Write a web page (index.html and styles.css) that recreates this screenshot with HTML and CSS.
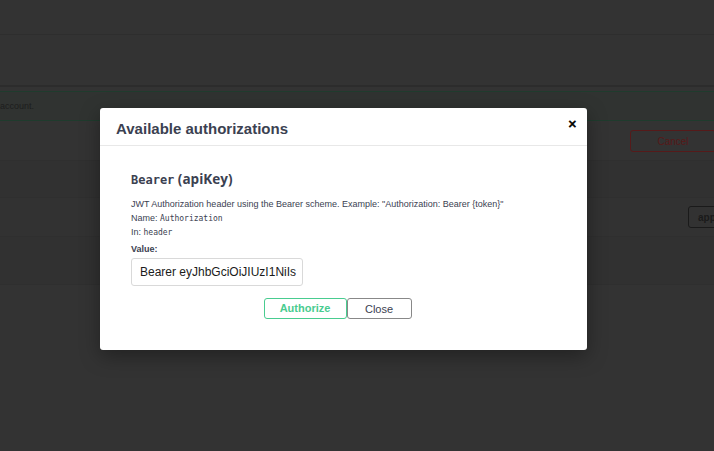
FILE: index.html
```html
<!DOCTYPE html>
<html>
<head>
<meta charset="utf-8">
<link rel="stylesheet" href="styles.css">
</head>
<body>
<div class="page">
  <div class="row r1"></div>
  <div class="row r2"></div>
  <div class="gap"></div>
  <div class="row note"><span>account.</span></div>
  <div class="row r3"><button class="cancel">Cancel</button></div>
  <div class="row r4"></div>
  <div class="row r5"><button class="app">app</button></div>
  <div class="row r6"></div>
  <div class="row r7"></div>
</div>
<div class="modal">
  <div class="modal-header">
    <h3>Available authorizations</h3>
    <button class="x">&#x2715;</button>
  </div>
  <div class="modal-body">
    <h4><code>Bearer</code>&nbsp;(apiKey)</h4>
    <p class="desc">JWT Authorization header using the Bearer scheme. Example: "Authorization: Bearer {token}"</p>
    <p class="meta">Name: <code>Authorization</code></p>
    <p class="meta">In: <code>header</code></p>
    <label class="lbl">Value:</label>
    <div class="input">Bearer eyJhbGciOiJIUzI1NiIs</div>
    <div class="actions">
      <button class="btn auth">Authorize</button>
      <button class="btn close">Close</button>
    </div>
  </div>
</div>
</body>
</html>
```
FILE: styles.css
```css
html, body { margin: 0; padding: 0; }
body {
  width: 714px; height: 451px; overflow: hidden;
  background: #333333;
  font-family: "Liberation Sans", Arial, sans-serif;
  position: relative;
}
.page { display: flex; flex-direction: column; }
.row { box-sizing: border-box; }
.r1 { height: 35px; border-bottom: 1px solid #2e2e2e; }
.r2 { height: 52px; border-bottom: 2px solid #2c2c2c; }
.gap { height: 4px; }
.note {
  height: 30px; background: #303331;
  border-top: 1px solid #1f3b2d; border-bottom: 1px solid #1f3b2d;
  display: flex; align-items: center;
  font-size: 9px; color: #1d1d1d; padding-left: 0;
}
.r3 { height: 39px; display: flex; justify-content: flex-end; align-items: center; padding-top: 1px; }
.cancel {
  width: 86px; height: 22px; margin-right: -2px; box-sizing: border-box;
  background: transparent; border: 1px solid #561a1a; border-radius: 3px;
  color: #581818; font-weight: normal; font-size: 10px; font-family: inherit;
}
.r4 { height: 38px; border-top: 1px solid #2f2f2f; border-bottom: 1px solid #2f2f2f; background: #313131; }
.r5 { height: 38px; display: flex; justify-content: flex-end; align-items: center; background: #323232; }
.app {
  width: 40px; height: 22px; margin-right: -14px; box-sizing: border-box;
  background: transparent; border: 1px solid #1a1a1a; border-radius: 3px;
  color: #1a1a1a; font-weight: bold; font-size: 10px; font-family: inherit; text-align: left; padding-left: 9px;
}
.r6 { height: 48px; border-top: 1px solid #2f2f2f; background: #313131; }
.r7 { height: 170px; border-top: 1px solid #2f2f2f; }

.modal {
  position: absolute; left: 100px; top: 108px;
  width: 487px; height: 242px; box-sizing: border-box;
  background: #fff; border-radius: 3px;
  box-shadow: 0 6px 20px rgba(0,0,0,0.35);
  color: #3b4151;
}
.modal-header {
  height: 38px; box-sizing: border-box;
  border-bottom: 1px solid #e8e8e8;
  display: flex; align-items: center; justify-content: space-between;
  padding: 0 10px 0 16px;
}
.modal-header h3 { margin: 0; font-size: 15px; font-weight: bold; padding-top: 3px; font-family: "Liberation Sans", Arial, sans-serif; }
.x {
  background: none; border: none; padding: 0; font-size: 11px; font-weight: bold; color: #000;
  margin-top: -4px; font-family: "DejaVu Sans", sans-serif; -webkit-text-stroke: 0.6px #000;
}
.modal-body { padding: 24px 31px 0 31px; }
.modal-body h4 { margin: 0 0 9px; font-size: 13.5px; font-weight: bold; font-family: "Open Sans", "Liberation Sans", sans-serif; }
.modal-body h4 code { font-family: "DejaVu Sans Mono", monospace; font-size: 12px; font-weight: 600; }
.desc, .meta { margin: 0; font-size: 9px; line-height: 14px; height: 14px; color: #3b4151; }
.meta code { font-family: "DejaVu Sans Mono", monospace; font-size: 8px; line-height: 14px; }
.lbl { display: block; font-size: 9px; font-weight: bold; margin-top: 3px; line-height: 14px; }
.input {
  margin-top: 2px; width: 172px; height: 28px; box-sizing: border-box;
  border: 1px solid #d9d9d9; border-radius: 3px;
  font-size: 12px; padding: 0 0 0 8px; display: flex; align-items: center; color: #1b1b1b;
  overflow: hidden; white-space: nowrap;
}
.actions { display: flex; justify-content: center; margin-top: 12px; margin-left: -12px; }
.btn {
  height: 21px; box-sizing: border-box; border-radius: 3px; background: #fff;
  font-family: inherit; font-size: 11px; padding: 0; font-weight: bold;
}
.auth { width: 83px; border: 1px solid #49cc90; color: #49cc90; padding-bottom: 2px; }
.close { width: 65px; border: 1px solid #888; color: #3b4151; font-weight: normal; font-size: 11px; }
```
